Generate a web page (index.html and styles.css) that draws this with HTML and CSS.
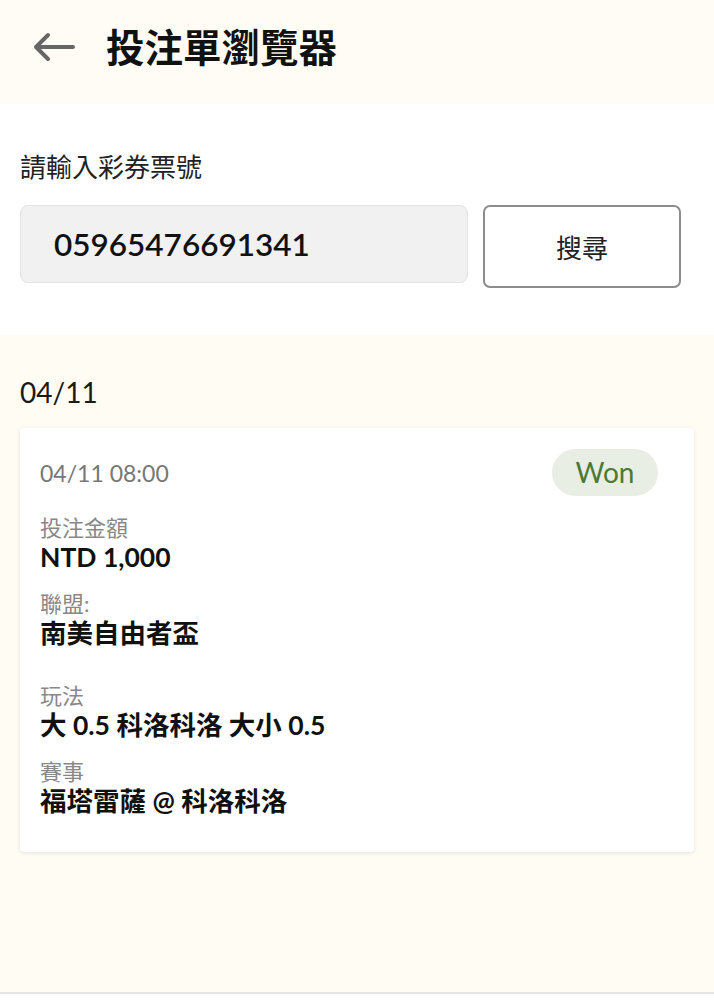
FILE: index.html
```html
<!DOCTYPE html>
<html lang="zh-Hant">
<head>
    <meta charset="UTF-8">
    <meta name="viewport" content="width=device-width, initial-scale=1.0">
    <title>投注單瀏覽器</title>
    <link rel="stylesheet" href="styles.css">
</head>
<body>

    <header class="topbar">
        <svg class="back" width="44" height="30" viewBox="0 0 44 30">
            <path d="M42 15 H5 M17 3 L5 15 L17 27" fill="none" stroke="#666" stroke-width="4" stroke-linecap="round" stroke-linejoin="round"/>
        </svg>
        <h1>投注單瀏覽器</h1>
    </header>

    <section class="search">
        <label for="ticket">請輸入彩券票號</label>
        <div class="search-row">
            <input type="text" id="ticket" value="05965476691341">
            <button type="button">搜尋</button>
        </div>
    </section>

    <section class="results">
        <div class="day">04/11</div>

        <div class="card">
            <div class="card-head">
                <span class="time">04/11 08:00</span>
                <span class="status">Won</span>
            </div>

            <div class="field">
                <div class="field-label">投注金額</div>
                <div class="field-value">NTD 1,000</div>
            </div>
            <div class="field field-wide">
                <div class="field-label">聯盟:</div>
                <div class="field-value">南美自由者盃</div>
            </div>
            <div class="field">
                <div class="field-label">玩法</div>
                <div class="field-value">大 0.5 科洛科洛 大小 0.5</div>
            </div>
            <div class="field">
                <div class="field-label">賽事</div>
                <div class="field-value">福塔雷薩 @ 科洛科洛</div>
            </div>
        </div>
    </section>

</body>
</html>
```

FILE: styles.css
```css
body {
    margin: 0;
    font-family: Lato, "Noto Sans CJK TC", sans-serif;
    background: #fff;
    color: #111;
}
.topbar {
    box-sizing: border-box;
    height: 104px;
    display: flex;
    align-items: center;
    gap: 31px;
    padding: 0 0 10px 31px;
    background: #fffcf5;
}
.back {
    flex: none;
}
.topbar h1 {
    margin: 0;
    font-size: 38.5px;
    font-weight: 700;
    line-height: 44px;
    color: #111;
}
.search {
    padding: 46px 20px 47px;
    background: #fff;
}
.search label {
    display: block;
    font-size: 26px;
    line-height: 34px;
    color: #222;
}
.search-row {
    display: flex;
    align-items: flex-start;
    gap: 15px;
    margin-top: 21px;
}
.search-row input {
    box-sizing: border-box;
    width: 448px;
    height: 78px;
    padding: 0 0 0 33px;
    border: 1px solid #e3e3e3;
    border-radius: 8px;
    background: #f1f1f1;
    font-family: inherit;
    font-size: 31.5px;
    font-weight: 600;
    color: #111;
}
.search-row button {
    box-sizing: border-box;
    width: 198px;
    height: 83px;
    border: 2px solid #8c8c8c;
    border-radius: 7px;
    background: #fff;
    font-family: inherit;
    font-size: 26px;
    color: #222;
}
.results {
    padding: 40px 20px 140px;
    background: #fffcf4;
    border-bottom: 2px solid #e6e6e4;
}
.day {
    font-size: 28px;
    line-height: 34px;
    color: #1a1a1a;
}
.card {
    margin-top: 19px;
    padding: 21px 36px 36px 20px;
    background: #fff;
    border-radius: 4px;
    box-shadow: 0 1px 4px rgba(0, 0, 0, 0.1);
}
.card-head {
    display: flex;
    justify-content: space-between;
    align-items: center;
    margin-bottom: 18px;
}
.time {
    font-size: 23px;
    color: #777;
}
.status {
    width: 106px;
    height: 47px;
    border-radius: 24px;
    background: #e8eee3;
    color: #4b7a33;
    font-size: 28px;
    line-height: 47px;
    text-align: center;
}
.field + .field {
    margin-top: 18px;
}
.field-wide + .field {
    margin-top: 34px;
}
.field-label {
    font-size: 22px;
    line-height: 28px;
    color: #888;
}
.field-value {
    font-size: 26.5px;
    line-height: 30px;
    font-weight: 700;
    color: #111;
}
```
